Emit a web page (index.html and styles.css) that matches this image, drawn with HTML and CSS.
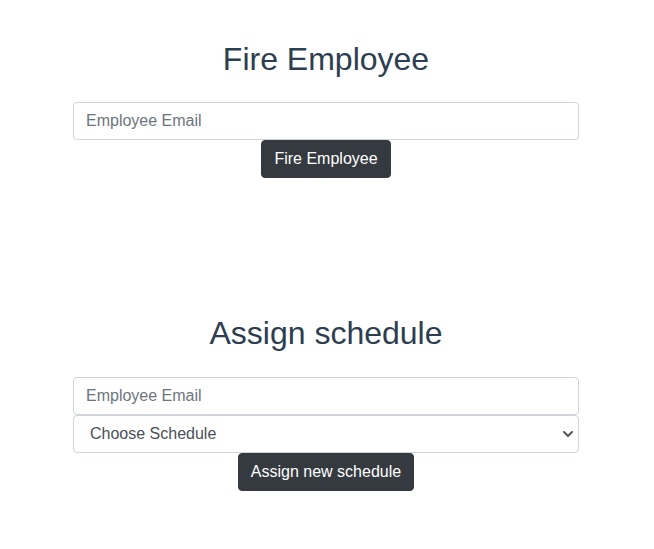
FILE: index.html
```html
<!DOCTYPE html>
<html>
<head>
<meta charset="utf-8">
<link rel="stylesheet" href="styles.css">
</head>
<body>
<div class="page">
  <section class="panel panel-fire">
    <h1 class="title">Fire Employee</h1>
    <form class="form">
      <input class="field" type="email" placeholder="Employee Email">
      <button class="btn" type="button">Fire Employee</button>
    </form>
  </section>
  <section class="panel panel-assign">
    <h1 class="title">Assign schedule</h1>
    <form class="form">
      <input class="field" type="email" placeholder="Employee Email">
      <div class="select-wrap">
        <select class="field select">
          <option>Choose Schedule</option>
        </select>
        <svg class="chevron" width="10" height="6" viewBox="0 0 10 6"><path d="M1 1 L5 5 L9 1" fill="none" stroke="#495057" stroke-width="1.8" stroke-linecap="round" stroke-linejoin="round"/></svg>
      </div>
      <button class="btn" type="button">Assign new schedule</button>
    </form>
  </section>
</div>
</body>
</html>
```
FILE: styles.css
```css
html, body {
  margin: 0;
  padding: 0;
  background: #ffffff;
}
body {
  font-family: "Liberation Sans", Arial, sans-serif;
  color: #2c3e50;
}
.page {
  padding: 40px 75px 0 73px;
}
.panel-assign {
  margin-top: 136px;
}
.title {
  margin: 0 0 24px 0;
  font-size: 32px;
  font-weight: 400;
  line-height: 38px;
  text-align: center;
  color: #2c3e50;
}
.panel-assign .title {
  margin-bottom: 25px;
}
.form {
  display: flex;
  flex-direction: column;
  align-items: center;
  margin: 0;
}
.field {
  box-sizing: border-box;
  display: block;
  width: 100%;
  height: 38px;
  margin: 0;
  padding: 6px 12px;
  font-family: "Liberation Sans", Arial, sans-serif;
  font-size: 16px;
  line-height: 24px;
  color: #495057;
  background: #ffffff;
  border: 1px solid #ced4da;
  border-radius: 4px;
  outline: none;
}
.field::placeholder {
  color: #6c757d;
  opacity: 1;
}
.select-wrap {
  position: relative;
  width: 100%;
}
.select {
  -webkit-appearance: none;
  appearance: none;
  padding-left: 16px;
}
.chevron {
  position: absolute;
  right: 6px;
  top: 16px;
  pointer-events: none;
}
.btn {
  box-sizing: border-box;
  height: 38px;
  margin: 0;
  padding: 6px 12px;
  font-family: "Liberation Sans", Arial, sans-serif;
  font-size: 16px;
  line-height: 24px;
  color: #ffffff;
  background: #343a40;
  border: 1px solid #343a40;
  border-radius: 4px;
}
```
